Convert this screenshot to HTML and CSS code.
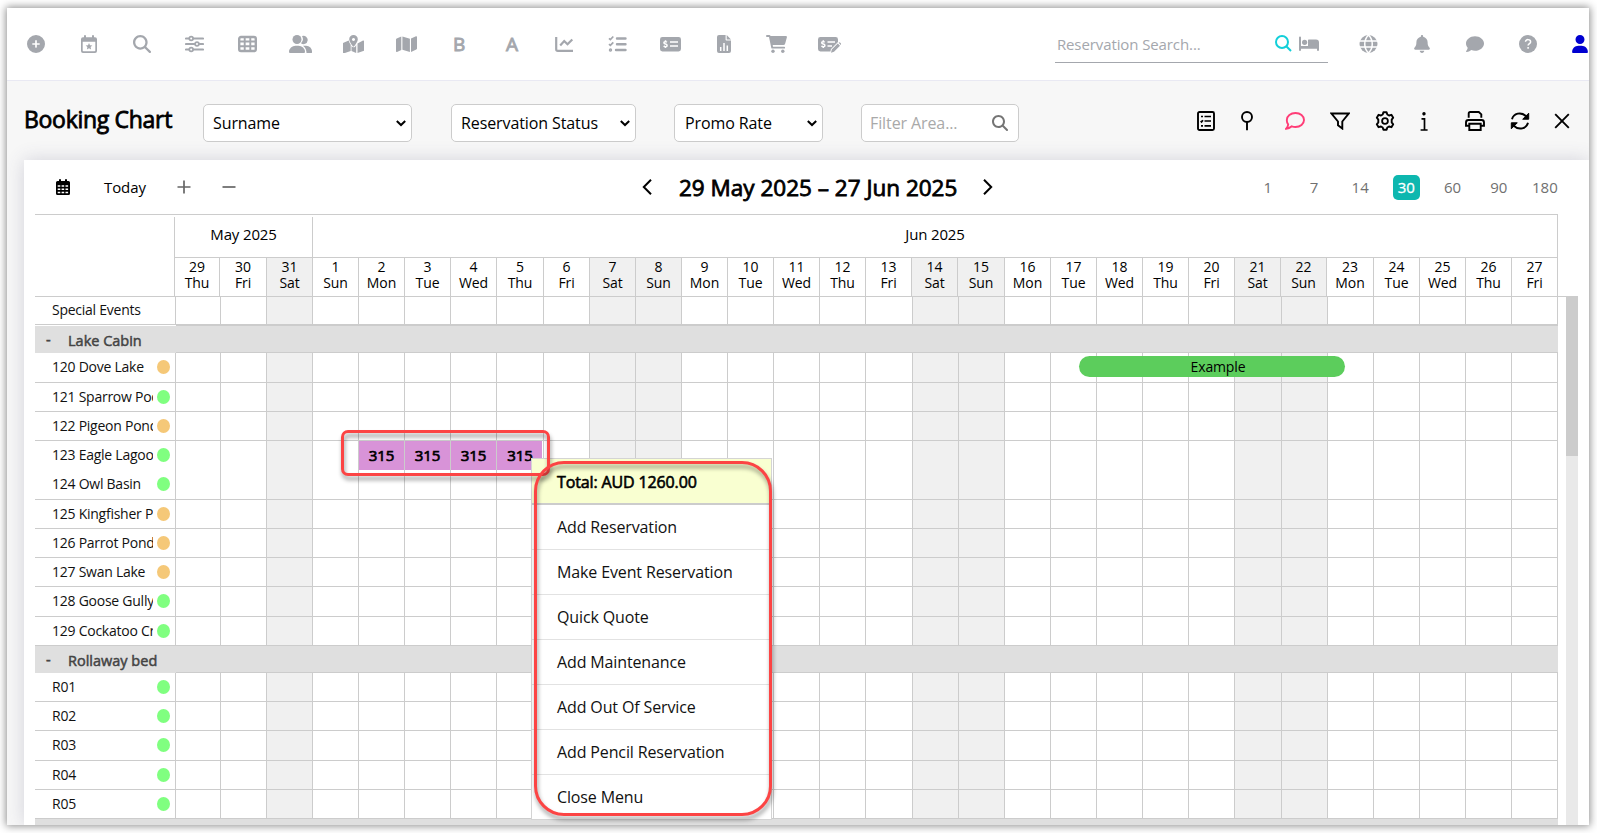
FILE: index.html
```html
<!DOCTYPE html>
<html lang="en">
<head>
<meta charset="utf-8">
<title>Booking Chart</title>
<link rel="stylesheet" href="styles.css">
</head>
<body>
<main class="window">
  <nav class="topbar">
    <div class="nav-left">
      <span class="nav-item"><svg width="18" height="18" viewBox="0 0 512 512"><path d="M256 512A256 256 0 1 0 256 0a256 256 0 1 0 0 512zM232 344V280H168c-13.3 0-24-10.7-24-24s10.7-24 24-24h64V168c0-13.3 10.7-24 24-24s24 10.7 24 24v64h64c13.3 0 24 10.7 24 24s-10.7 24-24 24H280v64c0 13.3-10.7 24-24 24s-24-10.7-24-24z"/></svg></span>
      <span class="nav-item"><svg width="16" height="18" viewBox="0 0 16 18"><path fill-rule="evenodd" d="M4 0a1 1 0 0 1 1 1v1.300h6V1a1 1 0 0 1 2 0v1.300h1a2 2 0 0 1 2 2V16a2 2 0 0 1-2 2H2a2 2 0 0 1-2-2V4.300a2 2 0 0 1 2-2h1V1a1 1 0 0 1 1-1zM1.700 6.700V15.500a.8.8 0 0 0 .8.8h11a.8.8 0 0 0 .8-.8V6.700zM8 8l1 2.200 2.400.3-1.800 1.600.5 2.400L8 13.300l-2.100 1.200.5-2.400-1.800-1.600 2.400-.3z"/></svg></span>
      <span class="nav-item"><svg width="18" height="18" viewBox="0 0 512 512"><path d="M416 208c0 45.9-14.900 88.3-40 122.7L502.6 457.4c12.500 12.500 12.500 32.8 0 45.3s-32.8 12.500-45.3 0L330.7 376c-34.4 25.200-76.8 40-122.7 40C93.100 416 0 322.900 0 208S93.100 0 208 0S416 93.100 416 208zM208 352a144 144 0 1 0 0-288 144 144 0 1 0 0 288z"/></svg></span>
      <span class="nav-item"><svg class="line" width="19" height="18" viewBox="0 0 19 18"><path d="M1 3.500h3M8.500 3.500H18M1 9h8.500M14 9H18M1 14.500h3M8.500 14.500H18" stroke-width="2.200" stroke-linecap="round"/><circle cx="6.200" cy="3.500" r="1.900" stroke-width="1.700"/><circle cx="12" cy="9" r="1.900" stroke-width="1.700"/><circle cx="6.200" cy="14.500" r="1.900" stroke-width="1.700"/></svg></span>
      <span class="nav-item"><svg class="line" width="19" height="18" viewBox="0 0 19 18"><rect x="1.200" y="2" width="16.600" height="14" rx="1.800" stroke-width="2.400"/><path d="M1 6.500h17M1 11.300h17M6.700 3v13M12.300 3v13" stroke-width="1.900"/></svg></span>
      <span class="nav-item"><svg width="23" height="18" viewBox="0 0 23 18"><circle cx="8" cy="4.500" r="4.500"/><path d="M0 17a6.500 6.500 0 0 1 6.500-6.300h3A6.500 6.500 0 0 1 16 17a1 1 0 0 1-1 1H1a1 1 0 0 1-1-1zM13 1a4.200 4.200 0 1 1-1 7.300 6 6 0 0 0 1-7.300zM14 10.700h3.200A5.800 5.800 0 0 1 23 16.800a1 1 0 0 1-1 1.200h-4.500c0-3-1-5.500-3.500-7.300z"/></svg></span>
      <span class="nav-item"><svg width="21" height="18" viewBox="0 0 21 18"><path fill-rule="evenodd" d="M10.500 0a4.300 4.300 0 0 1 4.300 4.400c0 2-2.500 5.300-3.700 6.900a.8.8 0 0 1-1.200 0C8.700 9.700 6.200 6.400 6.200 4.400A4.300 4.300 0 0 1 10.500 0zM10.500 3a1.500 1.500 0 1 0 .01 0z"/><path d="M0 8L5.700 5.500c.3 1.500 1.200 3 2 4.200V16L1 18.300c-.6.2-1-.1-1-.7zM8.500 11c1.300 1.900 3.300 1.700 4.200-.2l.5-.7V18l-4.700-2zM14.500 8.500L20 5.500c.5-.3 1 0 1 .6v9.600L14.500 18z"/></svg></span>
      <span class="nav-item"><svg width="21" height="18" viewBox="0 0 21 18"><path d="M0 4.500c0-.5.2-.8.700-1L5.300 1.500V15L1 17c-.6.200-1-.1-1-.7zM6.400 1.500l7.500 2.200v13.200L6.400 14.700zM15 3.500l5-2.300c.6-.2 1 .1 1 .7v11.600c0 .5-.2.8-.7 1L15 16.900z"/></svg></span>
      <span class="nav-item nav-letter">B</span>
      <span class="nav-item nav-letter">A</span>
      <span class="nav-item"><svg class="line" width="19" height="18" viewBox="0 0 19 18"><path d="M1.200 2v12.200c0 1 .6 1.600 1.600 1.600H18" stroke-width="2.200"/><path d="M5.200 10.500l4-4.500 3.300 3.300L17.300 4.500" stroke-width="2.200"/></svg></span>
      <span class="nav-item"><svg class="line" width="19" height="18" viewBox="0 0 19 18"><path d="M9 3.500h8.500M9 9.300h8.500M8 15h9.500" stroke-width="2.400" stroke-linecap="round"/><path d="M1 3.300l1.400 1.300L5.300 1.500M1 9.100l1.400 1.300L5.300 7.300" stroke-width="1.700"/><circle cx="2.500" cy="15" r="1" stroke-width="1.400"/></svg></span>
      <span class="nav-item"><svg width="21" height="18" viewBox="0 0 21 18"><rect y="2" width="21" height="14.500" rx="2.400"/><path class="cut" d="M10 7h8M10 11h8"/><path class="cut" stroke-width="1.300" d="M6.900 7.300C6 6.300 3.900 6.400 3.900 7.800c0 1.600 3.200.9 3.200 2.600 0 1.500-2.300 1.600-3.400.5M5.500 5.300v1M5.500 11.700v1.200"/></svg></span>
      <span class="nav-item"><svg width="14" height="18" viewBox="0 0 14 18"><path d="M2 0h6.600v4.600c0 .6.400 1 1 1H14V16a2 2 0 0 1-2 2H2a2 2 0 0 1-2-2V2a2 2 0 0 1 2-2zM9.700 0L14 4.500H9.700z"/><path class="cut" stroke-width="1.900" d="M3.700 12v4M7 8v8M10.300 10.500V16"/></svg></span>
      <span class="nav-item"><svg width="21" height="18" viewBox="0 0 21 18"><path d="M0 1c0-.6.400-1 .9-1h2.300c.7 0 1.200.4 1.400 1H20c.7 0 1.100.6.900 1.200l-1.700 6.300a2 2 0 0 1-2 1.600H6.700l.3 1.700h11.200a.9.900 0 0 1 0 1.800H6.200c-.5 0-.8-.3-.9-.7L3 1.900H.9C.4 1.900 0 1.600 0 1z"/><circle cx="7" cy="16.300" r="1.700"/><circle cx="16.800" cy="16.300" r="1.700"/></svg></span>
      <span class="nav-item"><svg width="23" height="18" viewBox="0 0 23 18"><path d="M2.400 2h15.200A2.400 2.400 0 0 1 20 4.400V7l-7 7-.6 2.500H2.400A2.400 2.400 0 0 1 0 14.100V4.400A2.400 2.400 0 0 1 2.400 2zM19.800 8.600l2.200 2.200-6 6-3 .9.800-3.100zM20.600 7.800a1.200 1.200 0 0 1 1.700 0l.5.500a1.200 1.200 0 0 1 0 1.700z"/><path class="cut" d="M9.500 7H17M9.500 11h4.500"/><path class="cut" stroke-width="1.300" d="M6.700 7.300C5.800 6.300 3.700 6.400 3.700 7.800c0 1.600 3.200.9 3.200 2.600 0 1.500-2.300 1.600-3.400.5M5.300 5.300v1M5.300 11.700v1.200"/></svg></span>
    </div>
    <div class="search">
      <span class="search-text">Reservation Search...</span>
      <svg class="line search-glass" width="17" height="17" viewBox="0 0 17 17"><circle cx="7" cy="7" r="6" stroke-width="2"/><path d="M11.300 11.300L16 16" stroke-width="2"/></svg>
      <svg width="20" height="16" viewBox="0 0 20 16"><path d="M0 1.500a1 1 0 0 1 2 0V10h7V4.500c0-.6.300-1 1-1h7a3 3 0 0 1 3 3V14a1 1 0 0 1-2 0v-1.300H2V14a1 1 0 0 1-2 0z"/><circle cx="5.600" cy="6.300" r="2.600"/></svg>
    </div>
    <div class="nav-right">
      <span class="nav-item"><svg width="19" height="18" viewBox="0 0 19 18"><circle cx="9.500" cy="9" r="9"/><path class="cut" stroke-width="1.100" d="M0 6h19M0 12h19M9.500 0C4.500 5 4.500 13 9.500 18M9.500 0c5 5 5 13 0 18"/></svg></span>
      <span class="nav-item"><svg width="16" height="18" viewBox="0 0 448 512"><path d="M224 0c-17.700 0-32 14.300-32 32V51.200C119 66 64 130.600 64 208v18.800c0 47-17.300 92.400-48.500 127.600l-7.400 8.300c-8.400 9.400-10.400 22.900-5.300 34.400S19.400 416 32 416H416c12.600 0 24-7.400 29.200-18.900s3.100-25-5.300-34.400l-7.400-8.300C401.300 319.200 384 273.900 384 226.800V208c0-77.400-55-142-128-156.800V32c0-17.700-14.300-32-32-32zm45.300 493.300c12-12 18.700-28.300 18.700-45.300H224 160c0 17 6.700 33.300 18.700 45.300s28.300 18.700 45.300 18.700s33.300-6.700 45.300-18.700z"/></svg></span>
      <span class="nav-item"><svg width="18" height="18" viewBox="0 0 512 512"><path d="M512 240c0 114.900-114.600 208-256 208c-37.100 0-72.300-6.400-104.100-17.900c-11.900 8.700-31.300 20.600-54.300 30.600C73.600 471.100 44.700 480 16 480c-6.500 0-12.300-3.900-14.800-9.900c-2.500-6-1.100-12.800 3.400-17.400l.3-.3c.3-.3 .7-.7 1.300-1.400c1.100-1.200 2.800-3.100 4.900-5.700c4.100-5 9.600-12.400 15.200-21.600c10-16.600 19.500-38.400 21.400-62.900C17.700 326.800 0 285.100 0 240C0 125.100 114.600 32 256 32s256 93.100 256 208z"/></svg></span>
      <span class="nav-item"><svg width="18" height="18" viewBox="0 0 18 18"><circle cx="9" cy="9" r="9"/><path class="cut" stroke-width="1.800" d="M6.500 6.700c.1-2.900 5.200-2.700 5.100.2 0 1.700-2.500 1.600-2.500 3.500M9.100 12v1.700"/></svg></span>
      <span class="nav-item user"><svg width="16" height="18" viewBox="0 0 448 512"><path d="M224 256A128 128 0 1 0 224 0a128 128 0 1 0 0 256zm-45.700 48C79.800 304 0 383.800 0 482.300C0 498.700 13.300 512 29.700 512H418.300c16.400 0 29.700-13.300 29.700-29.700C448 383.800 368.200 304 269.700 304H178.300z"/></svg></span>
    </div>
  </nav>

  <header class="page-head">
    <h1>Booking Chart</h1>
    <div class="select surname"><span>Surname</span><svg class="line" width="10" height="7" viewBox="0 0 10 7"><path d="M.8 1L5 5 9.200 1" stroke-width="2"/></svg></div>
    <div class="select status"><span>Reservation Status</span><svg class="line" width="10" height="7" viewBox="0 0 10 7"><path d="M.8 1L5 5 9.200 1" stroke-width="2"/></svg></div>
    <div class="select promo"><span>Promo Rate</span><svg class="line" width="10" height="7" viewBox="0 0 10 7"><path d="M.8 1L5 5 9.200 1" stroke-width="2"/></svg></div>
    <div class="select area"><span>Filter Area...</span><svg width="16" height="16" viewBox="0 0 512 512"><path d="M416 208c0 45.900-14.900 88.300-40 122.700L502.600 457.400c12.500 12.500 12.500 32.800 0 45.300s-32.800 12.500-45.300 0L330.700 376c-34.400 25.200-76.800 40-122.700 40C93.100 416 0 322.900 0 208S93.100 0 208 0S416 93.100 416 208zM208 352a144 144 0 1 0 0-288 144 144 0 1 0 0 288z"/></svg></div>
    <div class="tools">
      <svg class="line t-list" width="18" height="20" viewBox="0 0 18 20"><rect x="1" y="1" width="16" height="18" rx="1.500" stroke-width="1.900"/><path d="M7.500 5.500H14M7.500 10H14M7.500 14.800H14M4 5.500h2M4 14.800h2M3.700 10l.8.900 1.500-1.700" stroke-width="1.700"/></svg>
      <svg class="line t-pin" width="12" height="20" viewBox="0 0 12 20"><circle cx="6" cy="6" r="5" stroke-width="1.900"/><path d="M6 11v8.200" stroke-width="1.900"/></svg>
      <svg class="line t-chat" width="20" height="18" viewBox="0 0 20 18"><path d="M10.500 1C15.300 1 19 4 19 8s-3.700 7-8.500 7c-1.300 0-2.600-.3-3.700-.7C5.500 15.500 3.500 16.700 1.200 16.700c1.200-1.300 1.900-2.800 2-4.300C2 11.200 1.800 9.700 1.800 8 1.800 4 5.700 1 10.500 1z" stroke-width="1.900"/></svg>
      <svg class="line t-filter" width="20" height="18" viewBox="0 0 20 18"><path d="M1.500 1.500h17.200L12.300 9.500v7L8 13.200V9.500z" stroke-width="1.900"/></svg>
      <svg class="line t-gear" width="20" height="20" viewBox="0 0 20 20"><path d="M8.400 1.200h3.200l.7 2.300 1.700 1 2.400-.7 1.800 2.900-1.500 1.900v2.800l1.500 1.900-1.800 2.900-2.400-.7-1.700 1-.7 2.300H8.400l-.7-2.300-1.700-1-2.400.7-1.800-2.900 1.500-1.900V8.600L1.800 6.700l1.800-2.900 2.400.7 1.700-1z" stroke-width="1.900" stroke-linejoin="round"/><circle cx="10" cy="10" r="2.900" stroke-width="1.800"/></svg>
      <svg class="line t-info" width="8" height="20" viewBox="0 0 8 20"><circle cx="4" cy="2.800" r="1" fill="#000" stroke-width="1.400"/><path d="M1.500 7.800h3v11M.6 19h7" stroke-width="1.700"/></svg>
      <svg class="line t-print" width="20" height="20" viewBox="0 0 20 20"><path d="M3.700 6.800V2.500c0-.9.500-1.500 1.400-1.500h8.700l2.500 2.300v3.500M4 14.800H1V11.500C1 10 2 9 3.400 9h13.200C18 9 19 10 19 11.500v3.300h-3M4.300 12.800h11.400V19H4.300z" stroke-width="1.900"/></svg>
      <svg class="line t-sync" width="20" height="18" viewBox="0 0 20 18"><path d="M2 7.200C3.500 1.500 11-.8 16.200 4.300M18 10.800C16.500 16.500 9 18.800 3.800 13.700" stroke-width="1.900"/><path d="M18.700 1.200v6h-6zM1.300 16.800v-6h6z" fill="#000" stroke-width="1"/></svg>
      <svg class="line t-close" width="16" height="16" viewBox="0 0 16 16"><path d="M1.200 1.200L14.800 14.800M14.800 1.200L1.200 14.800" stroke-width="1.900"/></svg>
    </div>
  </header>

  <section class="card">
    <div class="card-bar">
      <div class="bar-left">
        <svg width="14" height="16" viewBox="0 0 14 16"><path d="M3 1a1 1 0 0 1 2 0v1h4V1a1 1 0 0 1 2 0v1h1.500A1.500 1.500 0 0 1 14 3.500V14.500A1.500 1.500 0 0 1 12.500 16h-11A1.500 1.500 0 0 1 0 14.500v-11A1.500 1.500 0 0 1 1.500 2H3z"/><path class="cut" stroke-width="2" stroke-dasharray="2.600 1.300" d="M1.700 7h11M1.700 10.300h11M1.700 13.500h11"/></svg>
        <span class="today">Today</span>
        <svg class="line grey" width="14" height="14" viewBox="0 0 14 14"><path d="M7 .5v13M.5 7h13" stroke-width="1.700"/></svg>
        <svg class="line grey minus" width="14" height="14" viewBox="0 0 14 14"><path d="M.5 7h13" stroke-width="1.700"/></svg>
      </div>
      <div class="range">
        <svg class="line" width="10" height="16" viewBox="0 0 10 16"><path d="M9 .8L1.800 8 9 15.200" stroke-width="2"/></svg>
        <span class="range-text">29 May 2025 – 27 Jun 2025</span>
        <svg class="line" width="10" height="16" viewBox="0 0 10 16"><path d="M1 .8L8.200 8 1 15.200" stroke-width="2"/></svg>
      </div>
      <div class="spans"><span>1</span><span>7</span><span>14</span><span><b>30</b></span><span>60</span><span>90</span><span>180</span></div>
    </div>

    <div class="chart-head">
      <div class="months"><div></div><div class="month may">May 2025</div><div class="month jun">Jun 2025</div></div>
      <div class="days" id="days"></div>
    </div>
    <div class="chart-scroll">
      <div class="chart-body" id="rows"></div>
      <div class="scrollbar"><div class="thumb"></div></div>
    </div>
  </section>

  <div class="menu">
    <div class="menu-total">Total: AUD 1260.00</div>
    <div>Add Reservation</div>
    <div>Make Event Reservation</div>
    <div>Quick Quote</div>
    <div>Add Maintenance</div>
    <div>Add Out Of Service</div>
    <div>Add Pencil Reservation</div>
    <div>Close Menu</div>
  </div>
  <div class="mark mark-cells"></div>
  <div class="mark mark-menu"></div>
</main>
<script src="script.js"></script>
</body>
</html>
```
FILE: styles.css
```css
* { box-sizing: border-box; }
body {
  margin: 0;
  height: 833px;
  padding: 8px 8px 8px 7px;
  background: #fff;
  overflow: hidden;
  font-family: "Open Sans", "Noto Sans", sans-serif;
  font-size: 14px;
  color: #000;
}
svg { display: block; flex: none; fill: currentColor; }
svg.line { fill: none; stroke: currentColor; }
svg .cut { fill: none; stroke: #fff; stroke-width: 1.500; }

.window {
  position: relative;
  display: flex;
  flex-direction: column;
  width: 1582px;
  height: 817px;
  background: #f7f7f7;
  box-shadow: 0 0 8px 1px rgba(0, 0, 0, .45);
}

/* top navigation */
.topbar {
  display: flex;
  align-items: center;
  height: 73px;
  flex: none;
  background: #fff;
  border-bottom: 1px solid #e9e9f3;
  color: #a4a7ad;
}
.nav-left, .nav-right { display: flex; }
.nav-left { margin-left: 2.500px; width: 846.400px; }
.nav-item {
  display: flex;
  width: 52.900px;
  height: 24px;
  flex: none;
  align-items: center;
  justify-content: center;
}
.nav-letter { font-size: 19px; -webkit-text-stroke: .9px #a4a7ad; }
.search {
  display: flex;
  align-items: center;
  width: 273px;
  height: 37px;
  margin: 0 0 0 199px;
  padding: 0 9px 0 2px;
  border-bottom: 1px solid #a4a7ad;
  color: #a4a7ad;
}
.search-text { width: 218px; font-size: 15px; letter-spacing: -.1px; }
.search-glass { color: #12cfd9; margin-right: 7px; }
.nav-right { margin-left: 14.500px; width: 246px; overflow: hidden; }
.user { color: #0000d0; }

/* page heading and filters */
.page-head { display: flex; height: 79px; flex: none; padding: 0 0 0 17px; }
h1 {
  margin: 20px 0 0;
  width: 179px;
  font-size: 23px;
  line-height: 36px;
  font-weight: 400;
  letter-spacing: -.3px;
  -webkit-text-stroke: .8px #000;
}
.select {
  display: flex;
  align-items: center;
  justify-content: space-between;
  height: 38px;
  margin-top: 23px;
  padding: 0 5px 0 9px;
  border: 1px solid #ccc;
  border-radius: 5px;
  background: #fff;
  font-size: 16px;
  letter-spacing: -.1px;
}
.surname { width: 209px; }
.status { width: 185px; margin-left: 39px; }
.promo { width: 149px; margin-left: 38px; padding-left: 10px; }
.area { width: 158px; margin-left: 38px; padding: 0 10px 0 8px; color: #a9a9a9; }
.area svg { color: #757575; }
.tools { display: flex; align-items: center; height: 79px; margin-left: 178px; }
.t-pin { margin-left: 26px; }
.t-chat { margin-left: 32px; color: #ff3d77; }
.t-filter { margin-left: 25px; }
.t-gear { margin-left: 25px; }
.t-info { margin-left: 25px; }
.t-print { margin-left: 37px; }
.t-sync { margin-left: 25px; }
.t-close { margin-left: 24px; }

/* chart card */
.card {
  flex: 1;
  min-height: 0;
  display: flex;
  flex-direction: column;
  margin-left: 17px;
  padding-left: 11px;
  background: #fff;
  box-shadow: 0 0 18px rgba(70, 70, 110, .2);
  clip-path: inset(-25px 0 0 -17px);
}
.card-bar {
  display: grid;
  grid-template-columns: 607px 1fr 338px;
  align-items: center;
  width: 1523px;
  height: 55px;
  flex: none;
  border-bottom: 1px solid #ccc;
}
.bar-left { display: flex; align-items: center; padding-left: 21px; font-size: 15px; }
.today { width: 43px; margin: 0 30px 0 34px; letter-spacing: -.1px; }
.grey { color: #666; }
.minus { margin-left: 31px; }
.range { display: flex; align-items: center; }
.range-text {
  width: 279px;
  margin: 0 25px 0 27px;
  font-size: 22.500px;
  white-space: nowrap;
  -webkit-text-stroke: .8px #000;
}
.spans { display: flex; margin-right: -10px; justify-content: flex-end; font-size: 15px; color: #707070; }
.spans span { display: flex; justify-content: center; align-items: center; width: 46.200px; height: 25px; }
.spans b {
  width: 27px;
  height: 25px;
  line-height: 25px;
  border-radius: 5px;
  background: #0db7af;
  color: #fff;
  text-align: center;
  font-weight: 400;
  -webkit-text-stroke: .3px #fff;
}

.chart-head { flex: none; width: 1531px; height: 82px; border-bottom: 1px solid #ccc; }
.months { display: grid; grid-template-columns: 139px 139px 1245px; height: 43px; width: 1523px; }
.month {
  border-right: 1px solid #ccc;
  border-bottom: 1px solid #ccc;
  text-align: center;
  line-height: 38px;
  font-size: 15px;
  letter-spacing: -.15px;
}
.may { border-left: 1px solid #ccc; margin-top: 2px; line-height: 34px; }
.days, .row {
  display: grid;
  width: 1523px;
}
.days { height: 38px; }
.days div {
  border-right: 1px solid #ccc;
  text-align: center;
  line-height: 16px;
  padding-top: 1px;
  letter-spacing: -.1px;
}
.chart-scroll { flex: 1; min-height: 0; display: flex; width: 1543px; }
.chart-body { width: 1523px; overflow: hidden; }
.row { position: relative; overflow: hidden; }
.row > div { border-right: 1px solid #ccc; border-bottom: 1px solid #ccc; }
.row > .weekend, .days .weekend { background: #f0f0f0; }
.label { display: flex; align-items: center; padding-left: 17px; letter-spacing: -.25px; color: #111; }
.label span { width: 101px; margin-top: -1px; overflow: hidden; white-space: nowrap; line-height: 24px; }
.label i { width: 13px; height: 14px; margin: -1px 0 0 4px; border-radius: 50%; }
.clean { background: #80ff80; }
.dirty { background: #f5c878; }
.row.events > div { border-bottom-width: 2px; }
.row.events > .label { border-bottom: 1px solid #ccc; margin-bottom: 1px; }
.group { display: flex; height: 27px; background: #dfdfdf; }
.group-name {
  width: 141px;
  padding-left: 11px;
  line-height: 29px;
  font-size: 14.500px;
  color: #444;
  white-space: nowrap;
  -webkit-text-stroke: .5px #444;
}
.group-name span { display: inline-block; width: 22px; position: relative; top: -1px; }
.group-fill { flex: 1; border-bottom: 1px solid #ccc; }
.row > .picked {
  background: #d893d8;
  text-align: center;
  line-height: 29px;
  font-size: 15px;
  letter-spacing: -.1px;
  -webkit-text-stroke: .7px #000;
}
.row > .picked-last { box-shadow: inset -1px 0 #fff; }
.row > .booking {
  position: absolute;
  left: 1044px;
  top: 3px;
  width: 266px;
  height: 21px;
  border: 0;
  border-radius: 11px;
  background: #5ccd5c;
  text-align: center;
  line-height: 21px;
  padding-left: 12px;
  letter-spacing: -.15px;
}
.scrollbar { width: 12px; margin-left: 8px; margin-top: -1px; background: #e9e9e9; }
.thumb { height: 160px; background: #ccc; }

/* context menu */
.menu {
  position: absolute;
  left: 524px;
  top: 450px;
  width: 241px;
  height: 362px;
  border: 1px solid #d4d4d4;
  background: #fff;
  font-size: 16px;
  letter-spacing: -.13px;
  color: #111;
}
.menu div { height: 45px; padding-left: 25px; line-height: 44px; border-bottom: 1px solid #e2e2e2; }
.menu div:last-child { border: 0; }
.menu .menu-total { height: 46px; border-bottom: 2px solid #ccc; background: #f9ffd1; color: #000; line-height: 46px; -webkit-text-stroke: .6px #000; }

/* highlight outlines */
.mark { position: absolute; border: 3px solid #fc4444; filter: drop-shadow(1px 4px 2px rgba(0, 0, 0, .4)); }
.mark-cells { left: 334px; top: 422px; width: 209px; height: 46px; border-radius: 7px; }
.mark-menu { left: 527px; top: 453px; width: 238px; height: 355px; border-radius: 30px; }
```
FILE: script.js
```js
const names = ["Thu", "Fri", "Sat", "Sun", "Mon", "Tue", "Wed"];
const weekend = new Set([2, 9, 10, 16, 17, 23, 24]);
const range = [...Array(30).keys()];
const columns = (label, special) =>
  label + "px " + range.map(i => (special[i] || 46) + "px").join(" ");

const days = document.getElementById("days");
days.style.gridTemplateColumns = columns(140, { 0: 45, 1: 47, 7: 47, 17: 47, 25: 47 });
days.innerHTML = "<div></div>" + range.map(i =>
  `<div class="${weekend.has(i) ? "weekend" : ""}">${i < 3 ? 29 + i : i - 2}<br>${names[i % 7]}</div>`).join("");

const bodyColumns = columns(141, { 0: 45, 7: 47, 15: 47, 23: 47 });
const rows = [
  ["events", "Special Events", 29],
  ["group", "Lake Cabin"],
  ["dirty", "120 Dove Lake", 30], ["clean", "121 Sparrow Pool", 29], ["dirty", "122 Pigeon Pond", 29],
  ["clean", "123 Eagle Lagoon", 29], ["clean", "124 Owl Basin", 30], ["dirty", "125 Kingfisher Pond", 29],
  ["dirty", "126 Parrot Pond", 29], ["dirty", "127 Swan Lake", 29], ["clean", "128 Goose Gully", 30],
  ["clean", "129 Cockatoo Creek", 29],
  ["group", "Rollaway bed"],
  ["clean", "R01", 29], ["clean", "R02", 29], ["clean", "R03", 30], ["clean", "R04", 29], ["clean", "R05", 29],
  ["group", ""]
];

document.getElementById("rows").innerHTML = rows.map(([kind, name, height]) => {
  if (kind === "group") {
    return `<div class="group"><div class="group-name"><span>${name ? "-" : ""}</span>${name}</div><div class="group-fill"></div></div>`;
  }
  const picked = name.startsWith("123");
  const cells = range.map(i => {
    const cls = [weekend.has(i) ? "weekend" : "", picked && i > 3 && i < 8 ? "picked" : "", picked && i === 7 ? "picked-last" : ""];
    return `<div class="${cls.join(" ").trim()}">${cls[1] ? "315" : ""}</div>`;
  }).join("");
  const dot = kind === "events" ? "" : `<i class="${kind}"></i>`;
  const booking = name.startsWith("120") ? `<div class="booking">Example</div>` : "";
  return `<div class="row ${kind === "events" ? kind : ""}" style="grid-template-columns:${bodyColumns};height:${height}px"><div class="label"><span>${name}</span>${dot}</div>${cells}${booking}</div>`;
}).join("");
```
